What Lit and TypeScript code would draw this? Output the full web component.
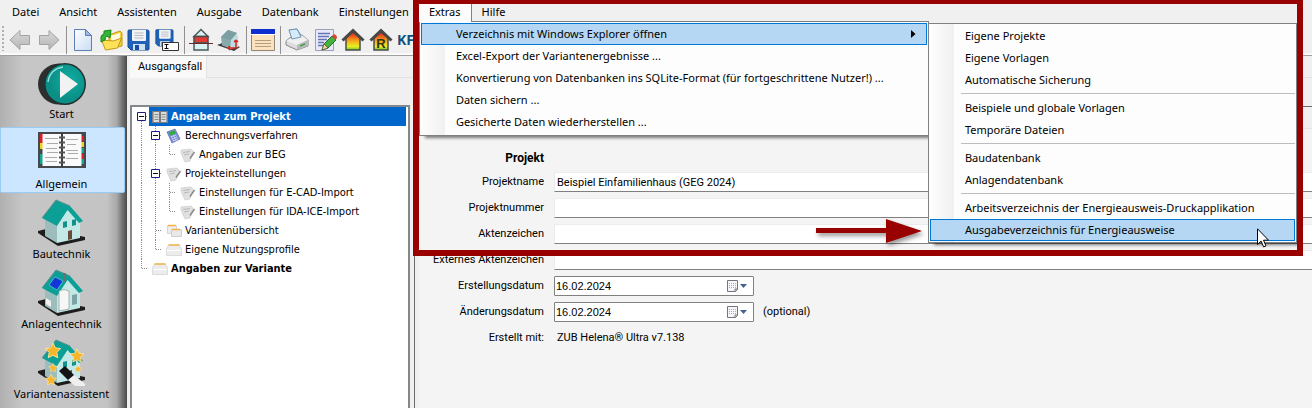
import { LitElement, html, svg, css, nothing, TemplateResult } from "lit";
import { customElement } from "lit/decorators.js";
import { classMap } from "lit/directives/class-map.js";

/* ---------- toolbar icons (24 x 24) ---------- */

const arrowShape = svg`<path d="M1 12 11 2.500v5h9.500v9H11v5z" fill="url(#gArrow)" stroke="#a3a3a3"/>`;
const disk = svg`
  <path d="M2 2h18.500a1.500 1.500 0 0 1 1.500 1.500V21a1 1 0 0 1-1 1H4l-3-3V3a1 1 0 0 1 1-1z" fill="#1f63b8" stroke="#144a93"/>
  <path d="M5 2h14v10a1 1 0 0 1-1 1H6a1 1 0 0 1-1-1z" fill="#f1f3f5"/>
  <path d="M7.500 5h9M7.500 7.500h9M7.500 10h9" stroke="#b4b9bf"/>
  <path d="M6 16h12v6H6z" fill="#cfe0f3"/><path d="M8 17h4v5H8z" fill="#174f9c"/>`;
const heatHouse = svg`<defs><linearGradient id="gHeat" x2="0" y2="1"><stop offset=".1" stop-color="#e5341c"/><stop offset=".5" stop-color="#f7a81c"/><stop offset=".8" stop-color="#e8f01f"/><stop offset="1" stop-color="#6cc72a"/></linearGradient></defs>
  <path d="M5 10l7-6 7 6v12H5z" fill="url(#gHeat)" stroke="#4b4b4b" stroke-width="1.500"/><path d="M1.500 12.500 12 2.500l10.500 10" fill="none" stroke="#474747" stroke-width="3"/>`;

const toolIcons: Record<string, TemplateResult> = {
  back: svg`<defs><linearGradient id="gArrow" x2="0" y2="1"><stop stop-color="#d9d9d9"/><stop offset="1" stop-color="#b5b5b5"/></linearGradient></defs>${arrowShape}`,
  forward: svg`<defs><linearGradient id="gArrow" x2="0" y2="1"><stop stop-color="#d9d9d9"/><stop offset="1" stop-color="#b5b5b5"/></linearGradient></defs><g transform="matrix(-1 0 0 1 23 0)">${arrowShape}</g>`,
  new: svg`<defs><linearGradient id="gPage" x2="1" y2="1"><stop stop-color="#ffffff"/><stop offset="1" stop-color="#c9dcf5"/></linearGradient></defs>
    <path d="M3.500 1.500h11l6 6v15h-17z" fill="url(#gPage)" stroke="#5b7fb4"/><path d="M14.500 1.500v6h6z" fill="#9dbbe2" stroke="#5b7fb4"/>`,
  open: svg`<path d="M10 7l11-4 2 2v13l-13 3z" fill="#f3cf34" stroke="#c59a12"/>
    <path d="M11 8l10-3v6l-8 2z" fill="#fffbe0"/><path d="M2.500 12l12 1 8-3-4 10-12 2z" fill="#ffe15a" stroke="#c59a12"/>
    <path d="M2 14V9q0-2 3-3V3l7-1-1 8-3-2q-2 1-2 4z" fill="#35b335" stroke="#168516"/>`,
  save: disk,
  saveas: svg`<g transform="scale(.82)">${disk}</g><path d="M7.500 14.500h16v8h-16z" fill="#fff" stroke="#333"/><path d="M9.500 16.500h4M9.500 20.500h4M11.500 16.500v4" stroke="#111"/>`,
  section: svg`<path d="M5 8.500 12 1.500l7 7z" fill="#d9f2f2" stroke="#4b5a5c" stroke-width="1.500"/><path d="M5 8.500h14v6.500H5z" fill="#e23b35" stroke="#4b4b4b" stroke-width="1.500"/>
    <path d="M5 15h14v7H5z" fill="#d9f2f2" stroke="#4b5a5c" stroke-width="1.500"/><path d="M0 15.500h24" stroke="#6b2a2a"/>`,
  model: svg`<path d="M0 17l8-3 15 5-6 4z" fill="#3c3c3c"/><path d="M5 10l8-8 8 6v11l-7 2-9-4z" fill="#bcdcdd"/><path d="M4 9l7-7 9 3-6 7-1 8-8-3z" fill="#86a9ac"/>
    <path d="M4 9l7-7 9 3-7 7z" fill="#7c9ea2"/><path d="M11 20h8v-8M11 20l2-2m-2 2 2 2M19 12l-2 2m2-2 2 2" stroke="#d8231f" fill="none" stroke-width="1.500"/>`,
  table: svg`<path d="M.5 1.500h23v21H.5z" fill="#fbe2bd" stroke="#8e8779"/><path d="M0 1h24v5H0z" fill="#0f2fd0"/><path d="M0 6.500h24" stroke="#fff"/><path d="M4 12.500h16M4 15.500h16M4 18.500h16" stroke="#b29f83"/>`,
  print: svg`<path d="M4 2l8-1 5 8-9 3z" fill="#d6ebfb" stroke="#7396b8"/><path d="M1 13l5-4 11-2 6 5v6l-11 4-11-5z" fill="#dcdcdc" stroke="#878787"/>
    <path d="M1 13l11 4 11-5-6-4.500L6 10z" fill="#efefef"/><path d="M12 17v5l11-4v-6z" fill="#b9b9b9"/><path d="M7 11l-3-9 8-1 4 8z" fill="#d6ebfb" stroke="#7396b8"/><path d="M15 18l5-2" stroke="#44a34b" stroke-width="1.500"/>`,
  edit: svg`<path d="M2.500 1.500h18v21h-18z" fill="#e6e9f8" stroke="#9aa0b8"/><path d="M5 5.500h12M5 8.500h11M5 11.500h9M5 14.500h6M5 17.500h5" stroke="#6873b5" stroke-width="1.500"/>
    <path d="M9 22l2-6 8-8 4 4-8 8z" fill="#43b23f" stroke="#23701f"/><path d="M19 8l2-2q3 1 3 4l-1.500 2z" fill="#e2413c"/><path d="M9 22l2-6 4 4z" fill="#f2d6a2" stroke="#5b4a2c" stroke-width=".7"/>`,
  energy: heatHouse,
  energyR: svg`${heatHouse}<text x="12" y="20" text-anchor="middle" font-family="Liberation Sans, sans-serif" font-weight="700" font-size="13" fill="#2f3412">R</text>`,
};

/* ---------- sidebar icons (48 x 48) ---------- */

const house = svg`
  <path d="M0 33l8-2 39 8v3l-27 6L0 35z" fill="#1d1d1d"/>
  <path d="M7 21l12 7v17L7 38z" fill="#9dbcbc"/>
  <path d="M19 27 30 11l12 14v15l-23 5z" fill="#c3e9e7"/>
  <path d="M4 20 18 2l14 6 13 15-4 2L29.500 12 19 28z" fill="#0c9f96"/>
  <path d="M4 20 18 2l14 6" fill="none" stroke="#5f8f8c"/>`;
const windows = svg`<path d="M25 24l4-1v6l-4 1zM34 22l4-1v6l-4 1z" fill="#12918a"/><path d="M30 33l4-1v9l-4 1z" fill="#6a4a3c"/>`;
const star = (x: number, y: number, s: number) => svg`<path transform="translate(${x} ${y}) scale(${s})" d="M0-9l2.600 5.500 6 .8-4.400 4.200 1.100 6L0 4.800-5.300 7.500l1.100-6-4.400-4.200 6-.8z" fill="#f7b52a" stroke="#ffe9a0" stroke-width="1"/>`;

const sideIcons: Record<string, TemplateResult> = {
  start: svg`<defs><radialGradient id="gStart" cx=".6" cy=".4"><stop stop-color="#12aea2"/><stop offset="1" stop-color="#0a8f86"/></radialGradient></defs>
    <ellipse cx="21" cy="26" rx="21" ry="20.500" fill="#2b2f30"/><ellipse cx="27" cy="26" rx="21" ry="21" fill="#22302f"/><ellipse cx="27" cy="26" rx="19.500" ry="19.500" fill="url(#gStart)"/>
    <path d="M10 24q2-13 15-15" fill="none" stroke="#8fe0d8" stroke-width="1.500"/><path d="M22 13l18 13-18 14z" fill="#f2f2f2"/>`,
  book: svg`<path d="M0 4h48v36H0z" fill="#45494c"/><path d="M2 6h3v9H2z" fill="#e01b2a"/><path d="M2 15h3v6H2z" fill="#f0d21c"/><path d="M2 26h3v10H2z" fill="#14a394"/>
    <path d="M43 8h3v5h-3z" fill="#e01b2a"/><path d="M43 14h3v5h-3z" fill="#f0d21c"/><path d="M43 20h3v5h-3z" fill="#14a394"/><path d="M43 26h3v5h-3z" fill="#e01b2a"/><path d="M43 31h3v5h-3z" fill="#14a394"/>
    <path d="M4.500 6H23v32H4.500zM25 6h18.500v32H25z" fill="#fafafa"/>
    <path d="M7 10.500h13M9 15.500h11M8 20.500h11M9 24.500h11M7 29.500h12M8 33.500h11M28 11.500h12M29 16.500h9M28 22.500h12M30 25.500h10M28 30.500h12" stroke="#a9abad"/>
    <path d="M24 5v34" stroke="#333"/><path d="M21 9.500h6M21 14.500h6M21 19.500h6M21 24.500h6M21 29.500h6M21 34.500h6" stroke="#555" stroke-width="2"/>`,
  house: svg`${house}${windows}`,
  plant: svg`${house}<path d="M25 5h3v9h-3z" fill="#6a7374"/><path d="M21 23q5-3 10 0v18l-10 2z" fill="#f6f6f6" stroke="#8c9a9a" stroke-width=".7"/><path d="M11 17l6-8 8 4-6 9z" fill="#1635d8" stroke="#7fd" stroke-width=".5"/>
    <path d="M34 27l5-1v10l-5 1z" fill="#7fa3a4"/><path d="M8 30l5 3v6l-5-3z" fill="#f0f0f0"/>`,
  wizard: svg`${house}${windows}<path d="M29 41l6-5 12 10v2H37z" fill="#efefef"/><path d="M21 33l6-5 9 9-6 5z" fill="#141414"/>${star(15, 13, 0.9)}${star(39, 18, 0.8)}${star(15, 30, 0.5)}${star(40, 31, 0.4)}${star(13, 42, 0.65)}`,
};

/* ---------- tree icons (16 x 16) ---------- */

const treeIcons: Record<string, TemplateResult> = {
  book: svg`<path d="M0 2h16v12H0z" fill="#7d7d7d"/><path d="M1.500 3h6v10h-6zM8.500 3h6v10h-6z" fill="#dcdcdc"/><path d="M2.500 5.500h4M2.500 8h4M2.500 10.500h4M9.500 5.500h4M9.500 8h4M9.500 10.500h4" stroke="#8d8d8d"/><path d="M8 3v10" stroke="#444"/>`,
  calc: svg`<path d="M1 4l8-3 5 10-8 4z" fill="#7d8fd6" stroke="#5a67a5" stroke-width=".7"/><path d="M2.500 4.500l6-2 1.500 3-6 2z" fill="#2fae3c"/><path d="M5 9l5-2M6 11l5-2M7 13l5-2" stroke="#eef" stroke-width="1.200" stroke-dasharray="1.500 .8"/>`,
  note: svg`<path d="M1 3l10-1 2 2-3 10-5 1L1 6z" fill="#e0e0e0" stroke="#cdcdcd" stroke-width=".7"/><path d="M3 5.500l7-1M4 8l5-1" stroke="#b8b8b8"/><path d="M14.500 5 10 11.500" stroke="#8a8a8a" stroke-width="1.500"/>`,
  cards: svg`<path d="M1.500 2.500h9v8h-9z" fill="#ededed" stroke="#d6d6d6"/><path d="M2 2.500h8" stroke="#f0b446" stroke-width="1.500"/><path d="M5.500 6.500h10v7h-10z" fill="#e9e9e9" stroke="#cfcfcf"/><path d="M6 6.500h8" stroke="#f0b446" stroke-width="1.500"/>`,
  card: svg`<path d="M2.500 3h11l2 4v6.500H.5V7z" fill="#ececec" stroke="#dcdcdc"/><path d="M2.500 3h11" stroke="#f0b446" stroke-width="1.500"/><path d="M1 8.500h14" stroke="#fff"/>`,
};

type Guide = "first" | "box" | "v" | "t" | "l";
const guide = (g: Guide) => html`<svg class="guide" viewBox="0 0 14 19" aria-hidden="true">
  ${g === "first" ? nothing : svg`<path class="dots" d="M7.500 0v${g === "l" ? 9 : 19}"/>`}
  ${g === "first" ? svg`<path class="dots" d="M7.500 14v5"/>` : nothing}
  ${g === "v" ? nothing : svg`<path class="dots" d="M8 9.500h6"/>`}
  ${g === "box" || g === "first" ? svg`<path d="M3.500 5.500h8v8h-8z" fill="#fff" stroke="#1c1c84"/><path d="M5 9.500h5" stroke="#111"/>` : nothing}
</svg>`;

const tree: { guides: Guide[]; icon: string; text: string; bold?: boolean; selected?: boolean }[] = [
  { guides: ["first"], icon: "book", text: "Angaben zum Projekt", bold: true, selected: true },
  { guides: ["v", "box"], icon: "calc", text: "Berechnungsverfahren" },
  { guides: ["v", "v", "l"], icon: "note", text: "Angaben zur BEG" },
  { guides: ["v", "box"], icon: "note", text: "Projekteinstellungen" },
  { guides: ["v", "v", "t"], icon: "note", text: "Einstellungen für E-CAD-Import" },
  { guides: ["v", "v", "l"], icon: "note", text: "Einstellungen für IDA-ICE-Import" },
  { guides: ["v", "t"], icon: "cards", text: "Variantenübersicht" },
  { guides: ["v", "l"], icon: "card", text: "Eigene Nutzungsprofile" },
  { guides: ["l"], icon: "card", text: "Angaben zur Variante", bold: true },
];

const SEPARATOR = "-";
const mainMenu = ["Datei", "Ansicht", "Assistenten", "Ausgabe", "Datenbank", "Einstellungen"];
const extras = [
  "Excel-Export der Variantenergebnisse ...",
  "Konvertierung von Datenbanken ins SQLite-Format (für fortgeschrittene Nutzer!) ...",
  "Daten sichern ...",
  "Gesicherte Daten wiederherstellen ...",
];
const folders = [
  "Eigene Projekte", "Eigene Vorlagen", "Automatische Sicherung", SEPARATOR,
  "Beispiele und globale Vorlagen", "Temporäre Dateien", SEPARATOR,
  "Baudatenbank", "Anlagendatenbank", SEPARATOR,
  "Arbeitsverzeichnis der Energieausweis-Druckapplikation", "Ausgabeverzeichnis für Energieausweise",
];
const tools: [string, string][] = [
  ["back", "Zurück"], ["forward", "Vorwärts"], [SEPARATOR, ""],
  ["new", "Neu"], ["open", "Öffnen"], ["save", "Speichern"], ["saveas", "Speichern unter"], [SEPARATOR, ""],
  ["section", "Schnitt"], ["model", "Modell"], [SEPARATOR, ""],
  ["table", "Tabelle"], [SEPARATOR, ""],
  ["print", "Drucken"], ["edit", "Bearbeiten"], ["energy", "Energieausweis"], ["energyR", "Referenzgebäude"],
];
const modules: [string, string][] = [
  ["start", "Start"], ["book", "Allgemein"], ["house", "Bautechnik"], ["plant", "Anlagentechnik"], ["wizard", "Variantenassistent"],
];

@customElement("app-root")
export class AppRoot extends LitElement {
  static styles = css`
    :host {
      display: block;
      --ui: "Noto Sans", "Open Sans", sans-serif;
      --form: Roboto, "Liberation Sans", sans-serif;
      --tree: "DejaVu Sans Condensed", "DejaVu Sans", sans-serif;
      --red: #990000;
      font: 11px/16px var(--ui);
      color: #000;
    }
    * { box-sizing: border-box; }
    button, input { font: inherit; color: inherit; border: 0; margin: 0; padding: 0; background: none; border-radius: 0; }
    button { white-space: nowrap; }
    svg { display: block; flex: none; }
    ul { list-style: none; margin: 0; padding: 0; }

    .window { position: relative; display: flex; flex-direction: column; height: 100vh; overflow: hidden; background: #f0f0f0; }

    .menubar { display: flex; flex: none; height: 24px; padding-left: 2px; }
    .menubar > button { padding: 0 10px; height: 24px; }
    .entry { position: relative; z-index: 2; }
    .entry > button { position: relative; z-index: 1; height: 22px; padding: 2px 10px 0; background: #fcfcfc; border-right: 1px solid #808080; }
    .menu { position: absolute; background: #fdfdfd; border: 1px solid #808080; padding: 1px;
      background-image: linear-gradient(90deg, #fdfdfd 2px, #f0f0f0 25px, #fdfdfd 25px);
      box-shadow: 4px 4px 3px -2px rgba(0, 0, 0, .5); }
    .dropdown { left: 0; top: 21px; width: 510px; padding-bottom: 2px; }
    .submenu { left: 507px; top: 0; width: 369px; }
    .item { display: block; width: 100%; height: 22px; padding: 0 10px 0 34px; text-align: left; border: 1px solid transparent; }
    .item.active { background: #b5d7f3; border-color: #0078d7; }
    .parent { position: relative; }
    .parent > .item { display: flex; align-items: center; justify-content: space-between; }
    .separator { height: 6px; padding: 2px 0 0 31px; }
    .separator::before { content: ""; display: block; border-top: 1px solid #bdbdbd; }

    .toolbar { display: flex; align-items: center; flex: none; height: 32px; padding-left: 7px; border-bottom: 1px solid #a0a0a0; box-shadow: inset 0 -2px #fafafa;
      background: repeating-linear-gradient(#b0b0b0 0 2px, transparent 2px 4px) 2px 2px / 2px 25px no-repeat; }
    .toolbar button { display: flex; flex: none; padding: 0 2px; }
    .toolbar svg { width: 24px; height: 24px; }
    .toolbar .divider { flex: none; width: 6px; height: 28px; padding-left: 3px; }
    .divider::before { content: ""; display: block; height: 100%; border-left: 1px solid #909090; }
    .toolbar .kfw { color: #10507c; font: bold 14px/24px var(--ui); }

    .body { display: flex; flex: 1; min-height: 0; }
    .modules { flex: none; display: flex; flex-direction: column; gap: 4px; width: 127px; padding: 1px 2px 0 0; overflow: hidden;
      background: linear-gradient(90deg, #b0b0b0, #c6c6c6 18%, #c4c4c4 84%, #a8a8a8 92%, #6a6a6a 97%, #4a4a4a); }
    .modules button { display: flex; flex-direction: column; align-items: center; flex: none; height: 66px; padding-right: 2px; border: 1px solid transparent; border-radius: 2px; }
    .modules button.current { background: #cce6ff; border-color: #99ccf5; }
    .modules svg { width: 48px; height: 48px; }

    .navigation { flex: none; display: flex; flex-direction: column; width: 286px; padding-left: 3px; font-family: var(--tree); }
    .tabs { display: flex; height: 22px; }
    .tabs::after { content: ""; flex: 1; border-bottom: 1px solid #e2e2e2; }
    .tabs button { height: 22px; padding: 0 4px 0 8px; background: #f9f9f9; border-right: 1px solid #e2e2e2; font-family: var(--form); }
    .tree { flex: 1; margin: 27px 3px 0 0; padding: 0 2px; background: #fff; border: 2px solid #84878c; border-bottom: 0; }
    .node { display: flex; height: 19px; }
    .guide { width: 14px; height: 19px; }
    .dots { stroke: #8a8a8a; stroke-dasharray: 1 1; fill: none; }
    .node button { display: flex; align-items: center; gap: 3px; margin-left: 1px; padding: 0 3px; }
    .node button svg { width: 16px; height: 16px; }
    .node.bold button { font-weight: bold; }
    .node.selected button { flex: 1; color: #fff; background: #0066cc; }

    .content { flex: 1; min-width: 0; display: flex; flex-direction: column; padding-top: 21px; }
    .content::before { content: ""; flex: none; height: 28px; border-top: 1px solid #e2e2e2; }
    .sheet { flex: 1; margin-left: 1px; padding: 21px 0 0 4px; border: solid #6c6c6c; border-width: 1px 0 0 1px; }
    form { display: grid; grid-template-columns: 125px minmax(0, 1fr); column-gap: 10px; grid-template-rows: 22px; grid-auto-rows: 26px; align-items: center;
      height: 100%; align-content: start; padding-top: 18px; background: #f4f4f4; border-top: 1px solid #e4e4e4; font-family: var(--form); }
    form > label, form > h2, form > span { text-align: right; white-space: nowrap; }
    h2 { grid-column: 1; margin: 0; font-size: 12px; line-height: 16px; }
    .caption { grid-column: 1; }
    .text { width: 100%; height: 20px; padding: 0 2px; background: #fff; border: 1px solid #ececec; border-bottom-color: #808080; border-right: 0; outline: 0; }
    .dates { display: flex; align-items: center; gap: 9px; }
    .date { display: flex; align-items: center; width: 200px; height: 20px; padding-right: 5px; background: #fff; border: 1px solid #808080; border-radius: 1px; font-family: "Liberation Sans", sans-serif; }
    .date input { flex: 1; min-width: 0; padding-left: 1px; outline: 0; }
    .date svg { width: 22px; height: 14px; }
    output { padding-left: 3px; }

    .highlight { position: absolute; z-index: 3; left: 413px; right: 9px; top: 0; height: 256px; border: 6px solid var(--red); border-top-width: 4px; pointer-events: none; }
    .pointer { position: absolute; z-index: 3; left: 814px; top: 216px; width: 116px; height: 34px; filter: drop-shadow(2px 3px 2px rgba(0, 0, 0, .4)); pointer-events: none; }
    .cursor { position: absolute; z-index: 4; left: 1257px; top: 228px; width: 13px; height: 20px; pointer-events: none; }
  `;

  private item(text: string) {
    if (text === SEPARATOR) return html`<div class="separator" role="separator"></div>`;
    return html`<button role="menuitem" class=${classMap({ item: true, active: text.startsWith("Ausgabeverzeichnis") })}>${text}</button>`;
  }

  private date(id: string, label: string, note = "") {
    return html`<label for=${id}>${label}</label>
      <div class="dates">
        <div class="date">
          <input id=${id} type="text" .value=${"16.02.2024"} />
          <button type="button" aria-label=${`${label} wählen`}>
            <svg viewBox="0 0 22 14"><path d="M1.500 1.500h10v9l-2 2h-8z" fill="#f4f6fa" stroke="#77737a"/><path d="M9 13v-3h3" fill="none" stroke="#77737a"/>
              <path d="M3 4.500h7M3 6.500h7M3 8.500h7" stroke="#a3adc6" stroke-dasharray="1 1"/><path d="M14 5h7l-3.500 4z" fill="#44608f"/></svg>
          </button>
        </div>
        ${note}
      </div>`;
  }

  render() {
    return html`<div class="window">
      <nav class="menubar">
        ${mainMenu.map((m) => html`<button>${m}</button>`)}
        <div class="entry">
          <button aria-expanded="true">Extras</button>
          <div class="menu dropdown" role="menu">
            <div class="parent">
              <button class="item active" role="menuitem">Verzeichnis mit Windows Explorer öffnen
                <svg width="5" height="8" viewBox="0 0 5 8"><path d="M0 0l4.500 4L0 8z"/></svg></button>
              <div class="menu submenu" role="menu">${folders.map((f) => this.item(f))}</div>
            </div>
            ${extras.map((e) => this.item(e))}
          </div>
        </div>
        <button>Hilfe</button>
      </nav>

      <div class="toolbar" role="toolbar">
        ${tools.map(([icon, label]) => icon === SEPARATOR
          ? html`<span class="divider"></span>`
          : html`<button aria-label=${label}><svg viewBox="0 0 24 24">${toolIcons[icon]}</svg></button>`)}
        <button class="kfw">KFW</button>
      </div>

      <div class="body">
        <nav class="modules">
          ${modules.map(([icon, label]) => html`<button class=${classMap({ current: label === "Allgemein" })}>
            <svg viewBox="0 0 48 48">${sideIcons[icon]}</svg>${label}</button>`)}
        </nav>

        <section class="navigation">
          <div class="tabs"><button>Ausgangsfall</button></div>
          <ul class="tree">
            ${tree.map((n) => html`<li class=${classMap({ node: true, bold: !!n.bold, selected: !!n.selected })}>
              ${n.guides.map(guide)}<button><svg viewBox="0 0 16 16">${treeIcons[n.icon]}</svg>${n.text}</button></li>`)}
          </ul>
        </section>

        <main class="content">
          <div class="sheet">
            <form>
              <h2>Projekt</h2>
              <label for="name" class="caption">Projektname</label><input id="name" class="text" .value=${"Beispiel Einfamilienhaus (GEG 2024)"} />
              <label for="number">Projektnummer</label><input id="number" class="text" />
              <label for="file">Aktenzeichen</label><input id="file" class="text" />
              <label for="external">Externes Aktenzeichen</label><input id="external" class="text" />
              ${this.date("created", "Erstellungsdatum")}
              ${this.date("changed", "Änderungsdatum", "(optional)")}
              <span>Erstellt mit:</span><output>ZUB Helena® Ultra v7.138</output>
            </form>
          </div>
        </main>
      </div>

      <div class="highlight"></div>
      <svg class="pointer" viewBox="0 0 116 34"><path d="M2 12h70V3l36 12-36 12v-10H2z" fill="#990000"/></svg>
      <svg class="cursor" viewBox="0 0 13 20"><path d="M.5.8v15.700l3.600-3.400 2.500 5.800 2.400-1-2.500-5.700h5z" fill="#fff" stroke="#000"/></svg>
    </div>`;
  }
}
